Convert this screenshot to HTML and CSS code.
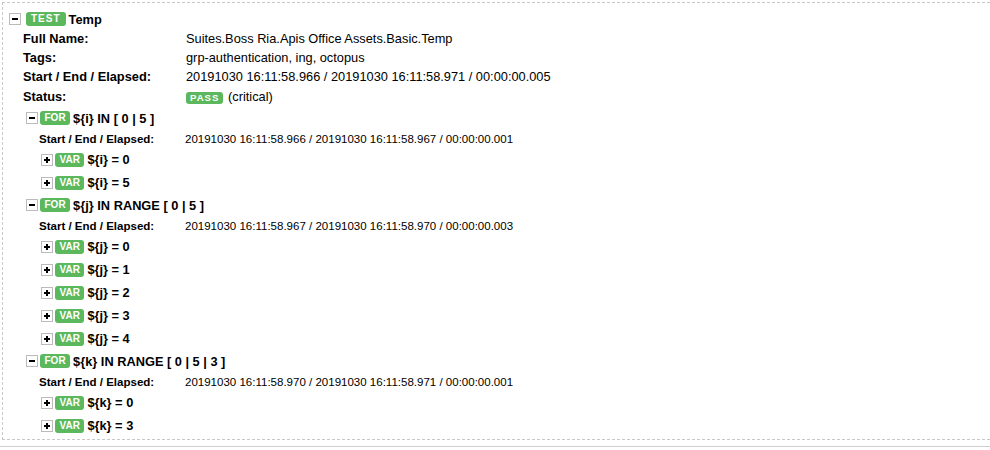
FILE: index.html
```html
<!DOCTYPE html>
<html>
<head>
<meta charset="utf-8">
<link rel="stylesheet" href="styles.css">
</head>
<body>
<div class="test">
  <div class="hdr">
    <span class="tg"><svg width="12" height="12" viewBox="0 0 12 12"><rect x="0.5" y="0.5" width="11" height="11" fill="#fff" stroke="#bbb"/><rect x="3" y="5" width="6" height="2" fill="#000"/></svg></span>
    <span class="label lsp">TEST</span>
    <span class="name">Temp</span>
  </div>
  <div class="meta">
    <div class="mrow"><div class="mk">Full Name:</div><div class="mv">Suites.Boss Ria.Apis Office Assets.Basic.Temp</div></div>
    <div class="mrow"><div class="mk">Tags:</div><div class="mv">grp-authentication, ing, octopus</div></div>
    <div class="mrow"><div class="mk">Start / End / Elapsed:</div><div class="mv">20191030 16:11:58.966 / 20191030 16:11:58.971 / 00:00:00.005</div></div>
    <div class="mrow status"><div class="mk">Status:</div><div class="mv"><span class="label lsp pass">PASS</span> (critical)</div></div>
  </div>
  <div class="children">
    <div class="kw">
      <div class="khdr">
        <span class="tg"><svg width="12" height="12" viewBox="0 0 12 12"><rect x="0.5" y="0.5" width="11" height="11" fill="#fff" stroke="#bbb"/><rect x="3" y="5" width="6" height="2" fill="#000"/></svg></span>
        <span class="label">FOR</span>
        <span class="name">${i} IN [ 0 | 5 ]</span>
      </div>
      <div class="kmeta"><div class="mk">Start / End / Elapsed:</div><div class="mv">20191030 16:11:58.966 / 20191030 16:11:58.967 / 00:00:00.001</div></div>
      <div class="vars">
        <div class="var"><span class="tg"><svg width="12" height="12" viewBox="0 0 12 12"><rect x="0.5" y="0.5" width="11" height="11" fill="#fff" stroke="#bbb"/><rect x="3" y="5" width="6" height="2" fill="#000"/><rect x="5" y="3" width="2" height="6" fill="#000"/></svg></span><span class="label">VAR</span><span class="name">${i} = 0</span></div>
        <div class="var"><span class="tg"><svg width="12" height="12" viewBox="0 0 12 12"><rect x="0.5" y="0.5" width="11" height="11" fill="#fff" stroke="#bbb"/><rect x="3" y="5" width="6" height="2" fill="#000"/><rect x="5" y="3" width="2" height="6" fill="#000"/></svg></span><span class="label">VAR</span><span class="name">${i} = 5</span></div>
      </div>
    </div>
    <div class="kw">
      <div class="khdr">
        <span class="tg"><svg width="12" height="12" viewBox="0 0 12 12"><rect x="0.5" y="0.5" width="11" height="11" fill="#fff" stroke="#bbb"/><rect x="3" y="5" width="6" height="2" fill="#000"/></svg></span>
        <span class="label">FOR</span>
        <span class="name">${j} IN RANGE [ 0 | 5 ]</span>
      </div>
      <div class="kmeta"><div class="mk">Start / End / Elapsed:</div><div class="mv">20191030 16:11:58.967 / 20191030 16:11:58.970 / 00:00:00.003</div></div>
      <div class="vars">
        <div class="var"><span class="tg"><svg width="12" height="12" viewBox="0 0 12 12"><rect x="0.5" y="0.5" width="11" height="11" fill="#fff" stroke="#bbb"/><rect x="3" y="5" width="6" height="2" fill="#000"/><rect x="5" y="3" width="2" height="6" fill="#000"/></svg></span><span class="label">VAR</span><span class="name">${j} = 0</span></div>
        <div class="var"><span class="tg"><svg width="12" height="12" viewBox="0 0 12 12"><rect x="0.5" y="0.5" width="11" height="11" fill="#fff" stroke="#bbb"/><rect x="3" y="5" width="6" height="2" fill="#000"/><rect x="5" y="3" width="2" height="6" fill="#000"/></svg></span><span class="label">VAR</span><span class="name">${j} = 1</span></div>
        <div class="var"><span class="tg"><svg width="12" height="12" viewBox="0 0 12 12"><rect x="0.5" y="0.5" width="11" height="11" fill="#fff" stroke="#bbb"/><rect x="3" y="5" width="6" height="2" fill="#000"/><rect x="5" y="3" width="2" height="6" fill="#000"/></svg></span><span class="label">VAR</span><span class="name">${j} = 2</span></div>
        <div class="var"><span class="tg"><svg width="12" height="12" viewBox="0 0 12 12"><rect x="0.5" y="0.5" width="11" height="11" fill="#fff" stroke="#bbb"/><rect x="3" y="5" width="6" height="2" fill="#000"/><rect x="5" y="3" width="2" height="6" fill="#000"/></svg></span><span class="label">VAR</span><span class="name">${j} = 3</span></div>
        <div class="var"><span class="tg"><svg width="12" height="12" viewBox="0 0 12 12"><rect x="0.5" y="0.5" width="11" height="11" fill="#fff" stroke="#bbb"/><rect x="3" y="5" width="6" height="2" fill="#000"/><rect x="5" y="3" width="2" height="6" fill="#000"/></svg></span><span class="label">VAR</span><span class="name">${j} = 4</span></div>
      </div>
    </div>
    <div class="kw">
      <div class="khdr">
        <span class="tg"><svg width="12" height="12" viewBox="0 0 12 12"><rect x="0.5" y="0.5" width="11" height="11" fill="#fff" stroke="#bbb"/><rect x="3" y="5" width="6" height="2" fill="#000"/></svg></span>
        <span class="label">FOR</span>
        <span class="name">${k} IN RANGE [ 0 | 5 | 3 ]</span>
      </div>
      <div class="kmeta"><div class="mk">Start / End / Elapsed:</div><div class="mv">20191030 16:11:58.970 / 20191030 16:11:58.971 / 00:00:00.001</div></div>
      <div class="vars">
        <div class="var"><span class="tg"><svg width="12" height="12" viewBox="0 0 12 12"><rect x="0.5" y="0.5" width="11" height="11" fill="#fff" stroke="#bbb"/><rect x="3" y="5" width="6" height="2" fill="#000"/><rect x="5" y="3" width="2" height="6" fill="#000"/></svg></span><span class="label">VAR</span><span class="name">${k} = 0</span></div>
        <div class="var"><span class="tg"><svg width="12" height="12" viewBox="0 0 12 12"><rect x="0.5" y="0.5" width="11" height="11" fill="#fff" stroke="#bbb"/><rect x="3" y="5" width="6" height="2" fill="#000"/><rect x="5" y="3" width="2" height="6" fill="#000"/></svg></span><span class="label">VAR</span><span class="name">${k} = 3</span></div>
      </div>
    </div>
  </div>
</div>
<div class="next"></div>
</body>
</html>
```
FILE: styles.css
```css
html, body {
  margin: 0;
  padding: 0;
  background: #fff;
}
body {
  font-family: "Liberation Sans", Helvetica, Arial, sans-serif;
  font-size: 12.8px;
  color: #000;
}
.test {
  margin: 2px 0 0 2px;
  border: 1px dashed #c8c8c8;
  border-right: none;
  padding: 6px 0 2px 6px;
}
.hdr {
  display: flex;
  align-items: center;
  height: 20px;
}
.tg {
  display: block;
  width: 12px;
  height: 12px;
  flex: none;
}
.tg svg {
  display: block;
}
.label {
  display: inline-block;
  padding: 0 4.5px;
  height: 14px;
  line-height: 14px;
  font-size: 10px;
  font-weight: bold;
  color: #fff;
  background: #5cb85c;
  border-radius: 3px;
  white-space: nowrap;
}
.label.lsp {
  letter-spacing: 1px;
  padding: 0 5px;
}
.hdr .label {
  margin-left: 5px;
}
.name {
  font-weight: bold;
  margin-left: 3px;
  white-space: nowrap;
}
.meta {
  margin-left: 14px;
}
.mrow {
  display: flex;
  align-items: center;
  height: 19px;
}
.mrow.status {
  height: 21px;
}
.mk {
  width: 163px;
  flex: none;
  font-weight: bold;
}
.mv {
  white-space: nowrap;
}
.label.pass {
  height: 12px;
  line-height: 12px;
  font-size: 9.6px;
  padding: 0 4px;
  margin-right: 1px;
}
.children {
  margin-left: 17px;
}
.khdr {
  display: flex;
  align-items: center;
  height: 22px;
}
.khdr .label,
.var .label {
  margin-left: 2px;
}
.kmeta {
  display: flex;
  align-items: center;
  height: 19px;
  margin-left: 13px;
  font-size: 11.52px;
}
.kmeta .mk {
  width: 146px;
}
.vars {
  margin-left: 15px;
}
.var {
  display: flex;
  align-items: center;
  height: 23px;
}
.next {
  margin-top: 6px;
  border-top: 1px solid #cfcfcf;
  height: 3px;
}
```
